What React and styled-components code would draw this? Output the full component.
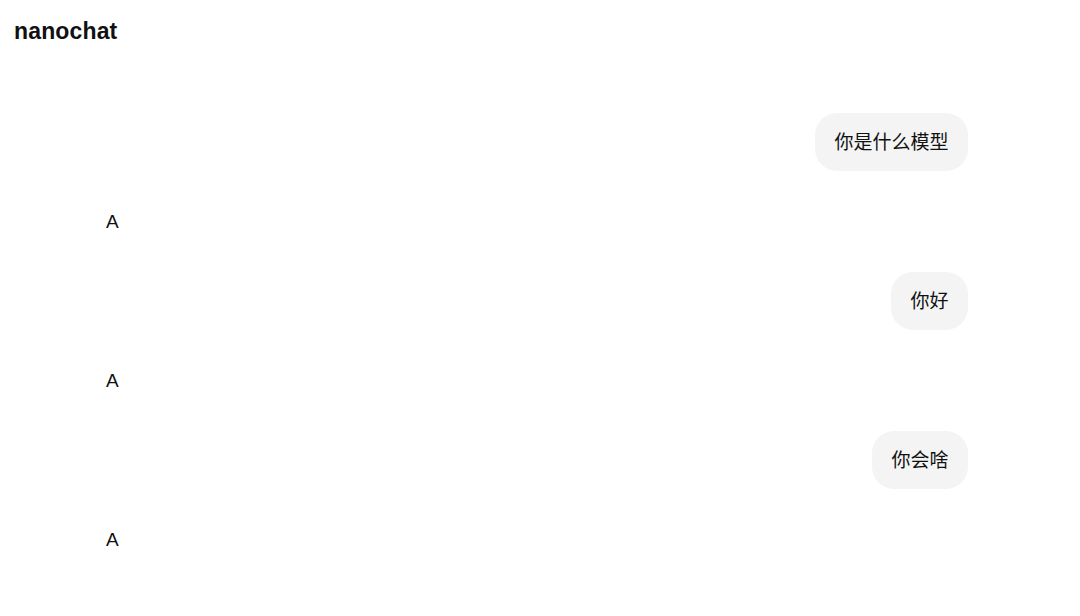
import React from 'react';
import styled, { createGlobalStyle } from 'styled-components';

const messages = [
  { role: 'user', content: '你是什么模型' },
  { role: 'assistant', content: 'A' },
  { role: 'user', content: '你好' },
  { role: 'assistant', content: 'A' },
  { role: 'user', content: '你会啥' },
  { role: 'assistant', content: 'A' },
];

const GlobalStyle = createGlobalStyle`
  html, body {
    margin: 0;
    padding: 0;
    background: #ffffff;
  }
  body {
    font-family: "Liberation Sans", "Noto Sans CJK SC", sans-serif;
    color: #111111;
  }
`;

const App = () => (
  <Page>
    <GlobalStyle />
    <Header>
      <Title>nanochat</Title>
    </Header>
    <Thread>
      {messages.map((msg, i) => (
        <Row key={i} $role={msg.role}>
          {msg.role === 'user'
            ? <Bubble>{msg.content}</Bubble>
            : <Reply>{msg.content}</Reply>}
        </Row>
      ))}
    </Thread>
  </Page>
);

const Page = styled.div`
  display: flex;
  flex-direction: column;
  min-height: 616px;
  background: #ffffff;
`;

const Header = styled.header`
  display: flex;
  align-items: center;
  height: 62px;
  padding: 0 14px;
`;

const Title = styled.h1`
  margin: 0;
  font-size: 23px;
  font-weight: 700;
  letter-spacing: 0.15px;
  color: #111111;
`;

const Thread = styled.main`
  display: flex;
  flex-direction: column;
  gap: 21.5px;
  padding: 51px 112px 0 106px;
`;

const Row = styled.div`
  display: flex;
  justify-content: ${(p) => (p.$role === 'user' ? 'flex-end' : 'flex-start')};
`;

const Bubble = styled.div`
  background: #f4f4f4;
  border-radius: 22px;
  padding: 15px 19.5px 13px;
  font-size: 19px;
  line-height: 30px;
  color: #111111;
`;

const Reply = styled.div`
  padding: 14px 0;
  font-size: 19px;
  line-height: 30px;
  color: #111111;
`;

export default App;
